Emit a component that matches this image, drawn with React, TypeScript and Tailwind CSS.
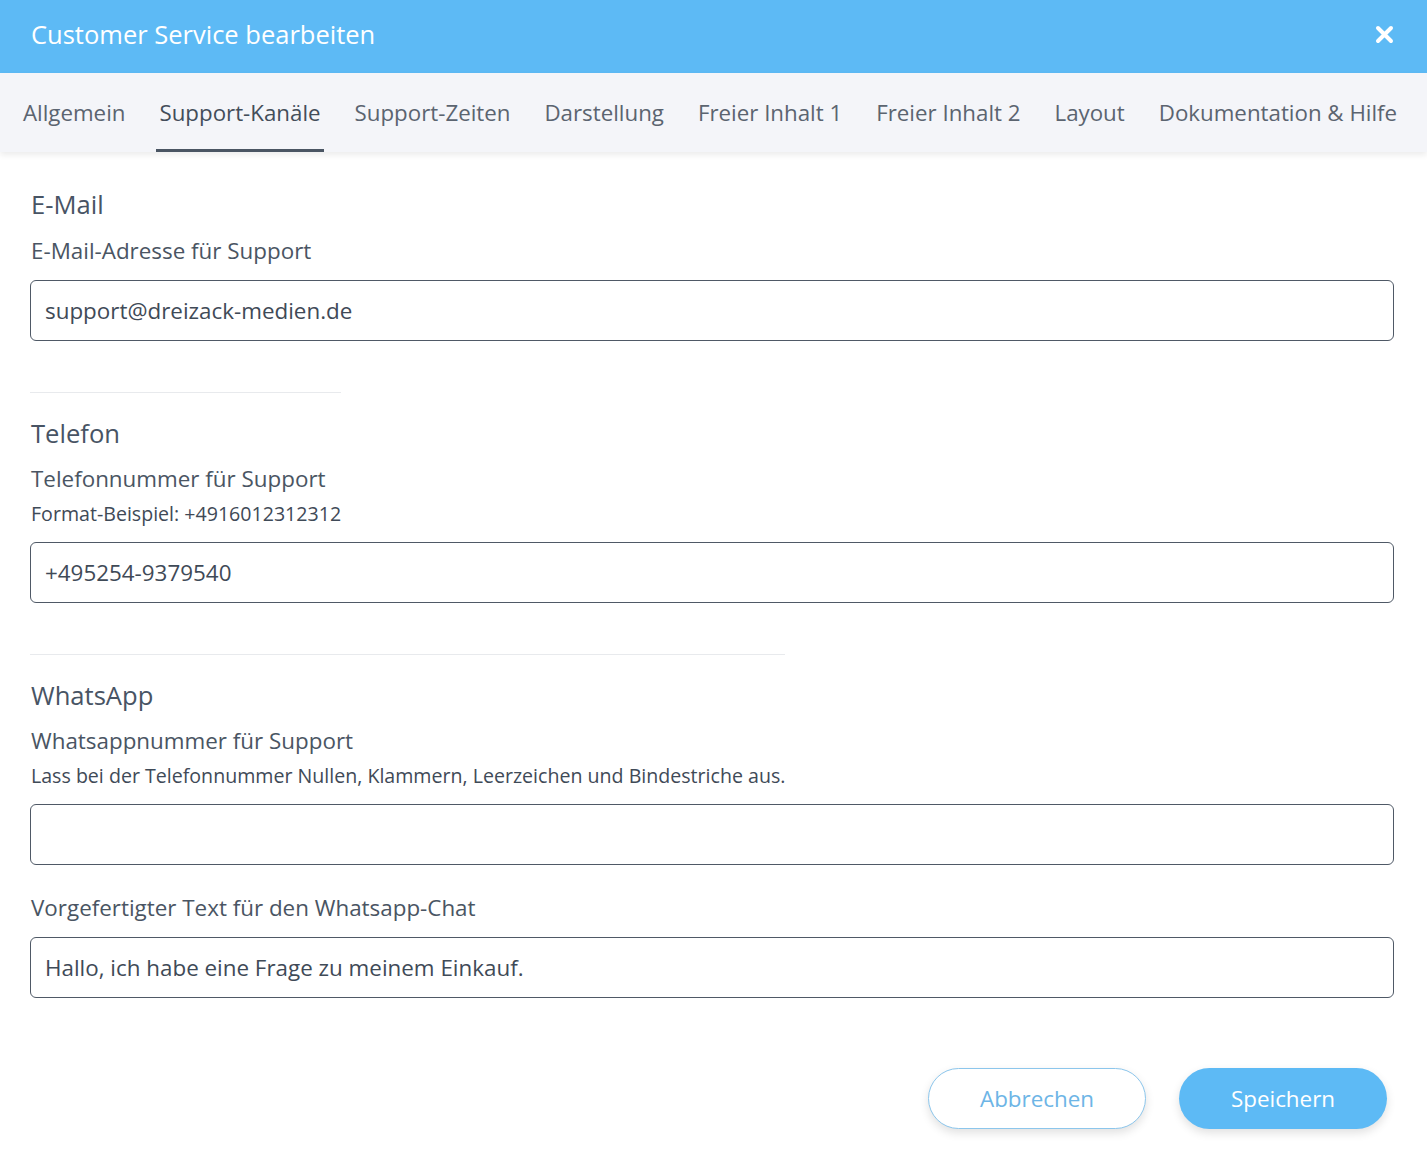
import React from 'react';

const tabs = [
  'Allgemein',
  'Support-Kanäle',
  'Support-Zeiten',
  'Darstellung',
  'Freier Inhalt 1',
  'Freier Inhalt 2',
  'Layout',
  'Dokumentation & Hilfe',
];

function Field({ value }: { value?: string }) {
  return (
    <div className="h-[61px] w-full rounded-[6px] border border-[#4f5966] bg-white px-[14px] flex items-center text-[22.4px] text-[#3f4a57]">
      {value}
    </div>
  );
}

export default function App() {
  return (
    <div className="min-h-[1167px] w-[1427px] bg-white text-[#4a5563]" style={{ fontFamily: '"Open Sans", sans-serif' }}>
      {/* Header */}
      <div className="h-[73px] bg-[#5dbaf5] flex items-center justify-between pl-[31px] pr-[33px] pb-[4px]">
        <h1 className="text-[25.5px] text-white leading-none">Customer Service bearbeiten</h1>
        <svg width="19" height="19" viewBox="0 0 19 19">
          <path d="M3 3 L16 16 M16 3 L3 16" stroke="white" strokeWidth="4" strokeLinecap="round" />
        </svg>
      </div>

      {/* Tabs */}
      <div className="h-[79px] bg-[#f4f5f9] shadow-[0_3px_6px_rgba(0,0,0,0.08)] flex items-stretch gap-[28px] pl-[20px] relative">
        {tabs.map((t, i) => (
          <div
            key={t}
            className={`px-[3px] flex items-center text-[22.3px] ${
              i === 1 ? 'text-[#434d5a] border-b-[3px] border-[#4a5563] pt-[3px]' : 'text-[#5b6470]'
            }`}
          >
            {t}
          </div>
        ))}
      </div>

      {/* Content */}
      <div className="pl-[30px] pr-[33px] pt-[36px]">
        <h2 className="text-[25.6px] leading-[34px] pl-[1px] text-[#485464]">E-Mail</h2>
        <p className="mt-[14px] text-[22.4px] leading-[30px] pl-[1px]">E-Mail-Adresse für Support</p>
        <div className="mt-[14px]">
          <Field value="support@dreizack-medien.de" />
        </div>

        <div className="mt-[51px] h-px w-[311px] bg-[#e8eaed]" />
        <h2 className="mt-[24px] text-[25.6px] leading-[34px] pl-[1px] text-[#485464]">Telefon</h2>
        <p className="mt-[13px] text-[22.4px] leading-[30px] pl-[1px]">Telefonnummer für Support</p>
        <p className="mt-[7px] text-[19.6px] leading-[26px] pl-[1px] text-[#3f4a57]">Format-Beispiel: +4916012312312</p>
        <div className="mt-[15px]">
          <Field value="+495254-9379540" />
        </div>

        <div className="mt-[51px] h-px w-[755px] bg-[#e8eaed]" />
        <h2 className="mt-[24px] text-[25.6px] leading-[34px] pl-[1px] text-[#485464]">WhatsApp</h2>
        <p className="mt-[13px] text-[22.4px] leading-[30px] pl-[1px]">Whatsappnummer für Support</p>
        <p className="mt-[7px] text-[19.6px] leading-[26px] pl-[1px] text-[#3f4a57]">
          Lass bei der Telefonnummer Nullen, Klammern, Leerzeichen und Bindestriche aus.
        </p>
        <div className="mt-[15px]">
          <Field />
        </div>

        <p className="mt-[28px] text-[22.4px] leading-[30px] pl-[1px]">Vorgefertigter Text für den Whatsapp-Chat</p>
        <div className="mt-[14px]">
          <Field value="Hallo, ich habe eine Frage zu meinem Einkauf." />
        </div>

        {/* Buttons */}
        <div className="mt-[70px] flex justify-end gap-[33px] pr-[7px]">
          <button className="h-[61px] w-[218px] rounded-full border border-[#8cc6ec] bg-white text-[22.4px] text-[#6db5e6] shadow-[0_4px_10px_rgba(0,0,0,0.12)]">
            Abbrechen
          </button>
          <button className="h-[61px] w-[208px] rounded-full bg-[#5dbaf5] text-[22.4px] text-white shadow-[0_4px_10px_rgba(0,0,0,0.12)]">
            Speichern
          </button>
        </div>
      </div>
    </div>
  );
}
